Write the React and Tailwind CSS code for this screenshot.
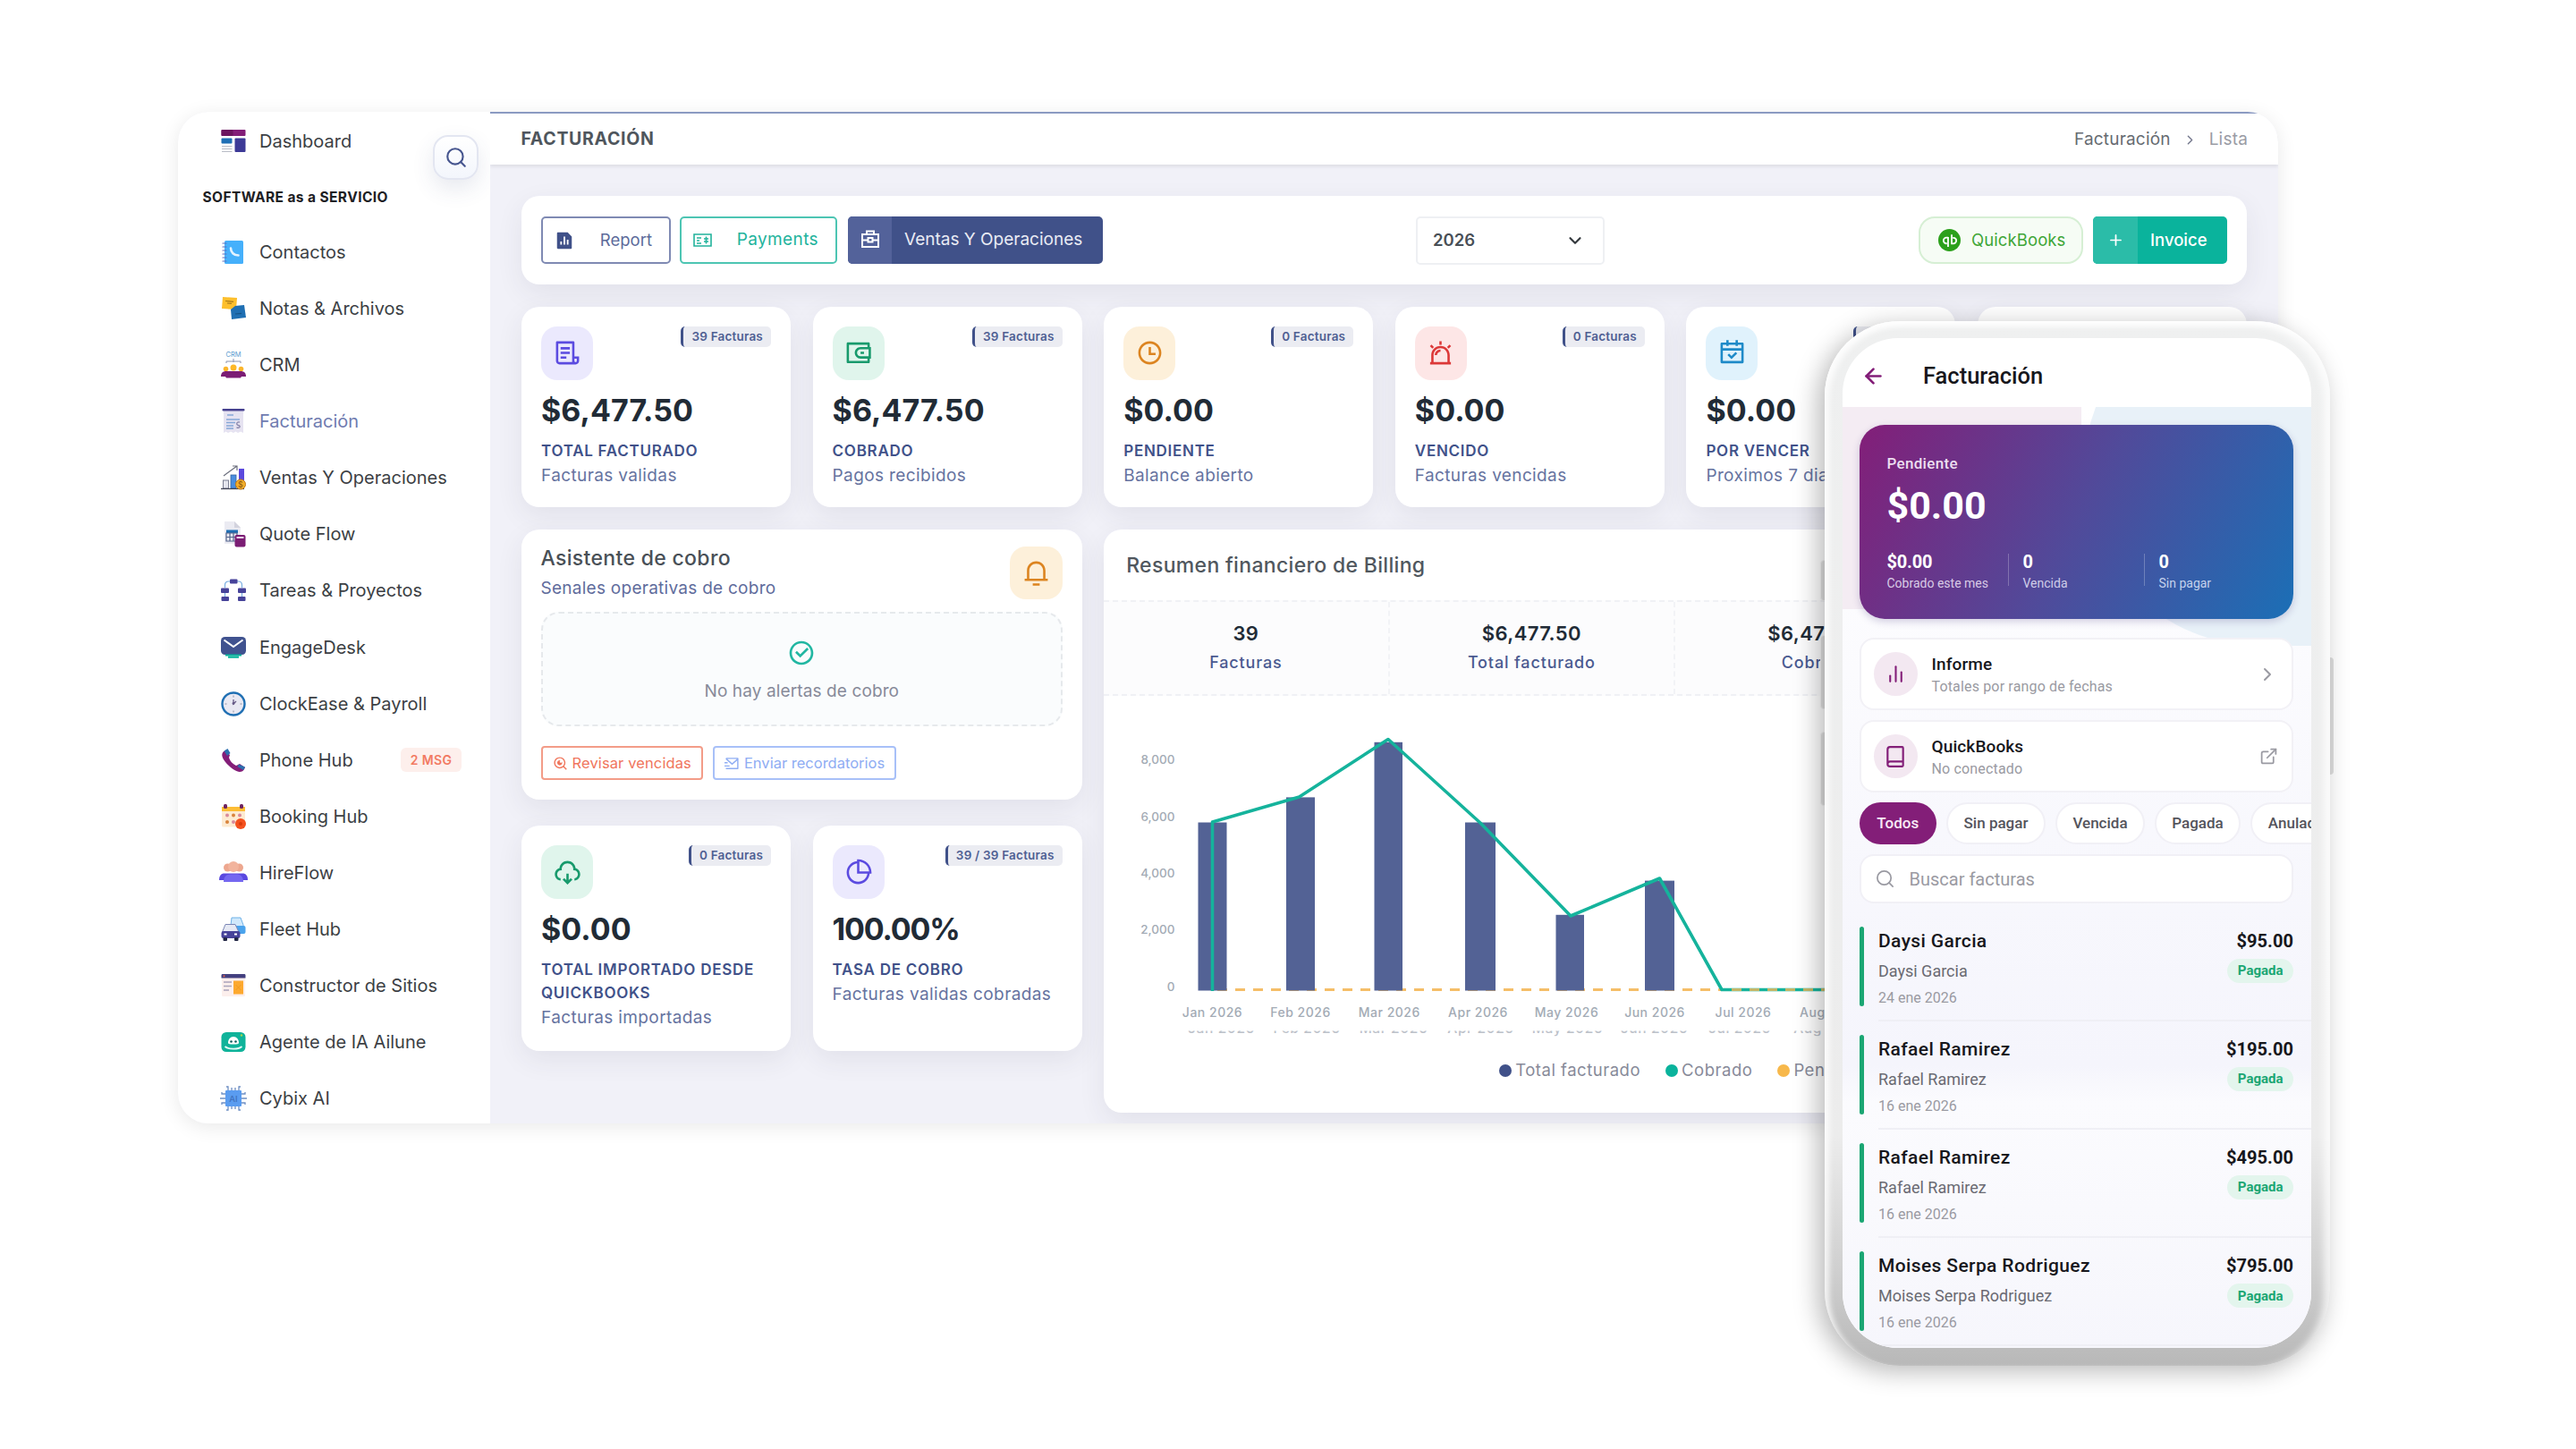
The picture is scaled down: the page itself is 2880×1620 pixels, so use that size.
import { ArrowLeft, Book, ChevronDown, ChevronRight, ExternalLink, Plus, Search } from "lucide-react"
import { FiBarChart2 } from "react-icons/fi"
import {
  RiAlarmWarningLine,
  RiCalendarCheckLine,
  RiCheckboxCircleLine,
  RiDownloadCloud2Line,
  RiFileChartFill,
  RiFileList3Line,
  RiMailSendLine,
  RiNotification3Line,
  RiPieChart2Line,
  RiSearchEyeLine,
  RiTimeLine,
  RiWallet3Line,
} from "react-icons/ri"

/* ---------- Sidebar icons ---------- */

const DashboardIcon = () => (
  <>
    <rect x="0.5" y="1" width="27" height="7" rx="1" fill="#831e78" />
    <rect x="0.5" y="1" width="13" height="7" rx="1" fill="#6b155f" />
    <rect x="0.5" y="10.5" width="12" height="6" rx="1" fill="#1e6fb5" />
    <rect x="15.5" y="10.5" width="12" height="15.5" rx="1" fill="#3d3a97" />
    <path d="M1 19.5h11.500M1 22.500h11.500M1 25.500h11.500" stroke="#b9bcc6" strokeWidth="1.2" />
  </>
)

const ContactsIcon = () => (
  <>
    <rect x="4" y="1" width="21" height="26" rx="1.5" fill="#45b0fb" />
    <path d="M2 4h4M2 8h4M2 12h4M2 16h4M2 20h4M2 24h4" stroke="#5b6fc0" strokeWidth="1.2" strokeLinecap="round" />
    <path d="M11 9.500c0 4.500 3.500 8 8.500 8" stroke="#e3f3ff" strokeWidth="2.6" strokeLinecap="round" fill="none" />
  </>
)

const NotesIcon = () => (
  <>
    <path d="M2 1l16 1-1 13-16-1z" fill="#fdbf2d" />
    <path d="M5 5.500l9 .8M7 8l5 .4" stroke="#a87a1d" strokeWidth="1.2" />
    <path d="M16 11l10-1 2 14-16 2-1-11z" fill="#1f6fb3" />
    <path d="M16 20l7-.6" stroke="#155488" strokeWidth="1.2" />
  </>
)

const CrmIcon = () => (
  <>
    <text x="14" y="5" textAnchor="middle" fontSize="7.5" fontFamily="Inter, sans-serif" fill="#5b9bd0">CRM</text>
    <path d="M6 12v-2h16v2M14 7v4" stroke="#8a93ad" strokeWidth="1" fill="none" />
    <circle cx="5.5" cy="18.500" r="2.8" fill="#fbb62c" />
    <circle cx="22.5" cy="18.500" r="2.8" fill="#fbb62c" />
    <circle cx="14" cy="17" r="3.5" fill="#fdb827" />
    <path d="M0 27c0-4 2-6 6-6h16c4 0 6 2 6 6h-5l-1 1.500H6L5 27z" fill="#7b1d74" />
  </>
)

const InvoiceIcon = () => (
  <>
    <path d="M3 2h22v25l-3-1.500-3 1.500-2.500-1.500L14 27l-3-1.500L8 27l-2.500-1.500L3 27z" fill="#e6e3f1" />
    <rect x="1.5" y="0" width="25" height="2.6" rx="1" fill="#46418f" />
    <path d="M7 7h7M6 12h15M6 15.500h10M6 19h8M6 22h8" stroke="#86a8d8" strokeWidth="1.4" />
    <path d="M21 15c-4-1-4 3-1.500 3.500S22 22 17.500 21" stroke="#8b88ad" strokeWidth="1.3" fill="none" />
  </>
)

const SalesIcon = () => (
  <>
    <path d="M3 12L18 1M13 1h5v5" stroke="#6c6f7d" strokeWidth="1.2" fill="none" />
    <rect x="2.5" y="17" width="6" height="9" fill="#e5e6ee" stroke="#7b7f92" />
    <rect x="11" y="11" width="6" height="15" fill="#4a8ee0" stroke="#35639f" strokeWidth="0.8" />
    <rect x="20" y="4" width="6" height="22" fill="#5b49dd" />
    <path d="M0 26.500h26" stroke="#3f4353" strokeWidth="1.2" />
    <circle cx="22" cy="21.500" r="5.5" fill="#f5ae2a" stroke="#c07a18" />
    <text x="22" y="25" textAnchor="middle" fontSize="9" fontFamily="Inter, sans-serif" fill="#8a540e">$</text>
  </>
)

const QuoteIcon = () => (
  <>
    <path d="M4 0h11l7 7v18H4z" fill="#ebebf2" />
    <path d="M15 0l7 7h-7z" fill="#d3d3de" />
    <rect x="6" y="9.500" width="13" height="3.5" fill="#1f6fb3" />
    <path d="M6 13h12v9H6zM10 13v9M14 13v9M6 17.500h12" stroke="#53648c" strokeWidth="1.2" fill="none" />
    <rect x="15.5" y="15" width="12" height="13.5" rx="2" fill="#7b1d74" />
    <rect x="17.5" y="17" width="8" height="2" fill="#edd3ea" />
  </>
)

const TasksIcon = () => (
  <>
    <path d="M4.500 11V8c0-2.500 1.500-4 4-4h11c2.500 0 4 1.500 4 4v3" stroke="#79aee2" strokeWidth="1.2" fill="none" />
    <path d="M4.500 17v4M23.500 17v4" stroke="#79aee2" strokeWidth="1.2" />
    <g fill="#47439a">
      <rect x="10" y="1.5" width="8.5" height="5" rx="1" />
      <rect x="0" y="11.5" width="9" height="5.5" rx="1" />
      <rect x="19" y="11.5" width="9" height="5.5" rx="1" />
      <rect x="0.5" y="21" width="8.5" height="5" rx="1" />
      <rect x="19" y="21" width="8.5" height="5" rx="1" />
    </g>
  </>
)

const EngageIcon = () => (
  <>
    <rect x="0" y="2" width="28" height="20" rx="4.5" fill="#40528f" />
    <path d="M3.500 5.500L14 13l10.500-7.500" stroke="#fff" strokeWidth="2" fill="none" />
    <path d="M5 22.500h18M8 24.800h12" stroke="#0ab39c" strokeWidth="2" />
  </>
)

const ClockIcon = () => (
  <>
    <circle cx="14" cy="14" r="12.5" fill="#e9e9f3" stroke="#1f6fb3" strokeWidth="2.4" />
    <path d="M14 4.500v2M14 21.500v2M4.500 14h2M21.500 14h2" stroke="#8c90a3" />
    <path d="M14 9v5l3-3" stroke="#665a86" strokeWidth="1.3" fill="none" />
    <circle cx="14" cy="13.5" r="1.4" fill="#665a86" />
  </>
)

const PhoneIcon = () => (
  <>
    <path d="M5 3c-5 2-5 7 0 13s12 11 16 11 5-3 6-5l-6-4-4 2c-4-2-7-5-8-9l1-3z" fill="#831e78" />
    <path d="M3.500 3.500l4-2.500 3 5-3.500 3zM20 18.500l7 3-2 3.500-6.500-4z" fill="#2c6fae" />
  </>
)

const BookingIcon = () => (
  <>
    <rect x="1" y="3" width="26" height="22.5" rx="1.5" fill="#fdebd2" />
    <path d="M1 3h26v5H1z" fill="#fdbd35" />
    <rect x="3" y="0" width="4" height="5" rx="1.5" fill="#6e2360" />
    <rect x="21" y="0" width="4" height="5" rx="1.5" fill="#6e2360" />
    <g fill="#d98a9b">
      <circle cx="7" cy="12.5" r="2" />
      <circle cx="21" cy="12.5" r="2" />
      <circle cx="14" cy="20" r="2" />
    </g>
    <g fill="#d9843c">
      <circle cx="14" cy="12.5" r="2" />
      <circle cx="7" cy="20" r="2" />
    </g>
    <circle cx="22" cy="22" r="6" fill="#f4511e" />
    <circle cx="22" cy="22" r="2" fill="#d83c0c" />
  </>
)

const HireIcon = () => (
  <>
    <circle cx="7.500" cy="8" r="4.5" fill="#eda78f" />
    <circle cx="20.500" cy="8" r="4.5" fill="#eda78f" />
    <circle cx="14" cy="7" r="6" fill="#f2b49d" />
    <path d="M-2 22c0-5 2-7.500 6-7.500h20c4 0 6 2.500 6 7.500z" fill="#5a48e0" />
    <path d="M3 24c0-6 3-8.500 8-8.500h6c5 0 8 2.500 8 8.500z" fill="#7467f0" />
  </>
)

const FleetIcon = () => (
  <>
    <path d="M12 1h10l3 8v9H10z" fill="#cfe8fb" stroke="#6fb2e8" />
    <rect x="15" y="10" width="12.5" height="9" rx="2" fill="#4aa3ec" />
    <path d="M5 8.500h11l4 8.500H1.500z" fill="#e6e9f4" stroke="#7b86b5" />
    <rect x="0.5" y="16" width="21" height="8" rx="2.5" fill="#47439a" />
    <rect x="2.5" y="23" width="4.5" height="4" rx="1" fill="#222745" />
    <rect x="15" y="23" width="4.5" height="4" rx="1" fill="#222745" />
    <path d="M3.500 19.500h3M15 19.500h3" stroke="#fff" strokeWidth="2" />
  </>
)

const SitesIcon = () => (
  <>
    <rect x="1" y="2" width="26" height="24" rx="1.5" fill="#fcefec" />
    <path d="M0.500 2.500C.5 1.500 1 1 2 1h24c1 0 1.500.5 1.500 1.500v3h-27z" fill="#43407f" />
    <circle cx="3.500" cy="3.300" r="1" fill="#f06548" />
    <path d="M3 10h9M3 14.500h9M3 19h6" stroke="#a9a3bb" strokeWidth="1.3" />
    <rect x="14" y="8.500" width="11" height="15" fill="#fda92f" />
    <path d="M16.500 13l6 6M22.500 13l-6 6" stroke="#f09b22" />
  </>
)

const AgentIcon = () => (
  <>
    <rect x="0.5" y="3" width="27" height="22" rx="5.5" fill="#0fb39a" />
    <path d="M8 15c0-4 2.500-7 6-7s6 3 6 7c0 1.500-2 1.500-6 1.500S8 16.500 8 15z" fill="#fff" />
    <circle cx="11.500" cy="13.500" r="1.3" fill="#0f5c5c" />
    <circle cx="16.500" cy="13.500" r="1.3" fill="#0f5c5c" />
    <path d="M4.500 19c4 3.500 15 3.500 19 0" stroke="#e2fbf6" strokeWidth="1.8" fill="none" />
    <circle cx="23" cy="6.500" r="1.2" fill="#a6d64b" />
  </>
)

const CybixIcon = () => (
  <>
    <path
      d="M8 6V1H6M12 6V2M16 6V2M20 6V1h2M8 22v5H6M12 22v4M16 22v4M20 22v5h2M6 9H1V7M6 14H-1M6 19H1v2M22 9h5V7M22 14h7M22 19h5v2"
      stroke="#6e8fc4"
      strokeWidth="1.3"
      fill="none"
    />
    <rect x="5" y="5" width="18" height="18" rx="1" fill="#5a9cf0" />
    <text x="14" y="17.500" textAnchor="middle" fontSize="9.5" fontWeight="500" fontFamily="Inter, sans-serif" fill="#3f70bb">AI</text>
  </>
)

const menuItems = [
  { label: "Contactos", icon: ContactsIcon },
  { label: "Notas & Archivos", icon: NotesIcon },
  { label: "CRM", icon: CrmIcon },
  { label: "Facturación", icon: InvoiceIcon, active: true },
  { label: "Ventas Y Operaciones", icon: SalesIcon },
  { label: "Quote Flow", icon: QuoteIcon },
  { label: "Tareas & Proyectos", icon: TasksIcon },
  { label: "EngageDesk", icon: EngageIcon },
  { label: "ClockEase & Payroll", icon: ClockIcon },
  { label: "Phone Hub", icon: PhoneIcon, badge: "2 MSG" },
  { label: "Booking Hub", icon: BookingIcon },
  { label: "HireFlow", icon: HireIcon },
  { label: "Fleet Hub", icon: FleetIcon },
  { label: "Constructor de Sitios", icon: SitesIcon },
  { label: "Agente de IA Ailune", icon: AgentIcon },
  { label: "Cybix AI", icon: CybixIcon },
]

function MenuItem({ label, icon: Icon, active, badge }) {
  return (
    <div className="flex h-[63.07px] shrink-0 items-center pl-[48px] pr-[32px]">
      <svg viewBox="0 0 28 28" className="h-[28px] w-[28px] shrink-0 overflow-visible">
        <Icon />
      </svg>
      <span className={`ml-[15px] whitespace-nowrap text-[20px] leading-7 ${active ? "text-[#6f7bb0]" : "text-[#3c3f44]"}`}>
        {label}
      </span>
      {badge && (
        <span className="ml-auto flex h-[27px] items-center rounded-md bg-[#fdefec] px-[10.5px] text-[14px] font-semibold tracking-[0.03em] text-[#f27a62]">
          {badge}
        </span>
      )}
    </div>
  )
}

function Sidebar() {
  return (
    <aside className="relative flex w-[349px] shrink-0 flex-col overflow-hidden bg-white pt-[1.5px]">
      <MenuItem label="Dashboard" icon={DashboardIcon} />
      <div className="flex h-[61px] shrink-0 items-center pl-[27.5px] pt-px text-[15.5px] font-bold tracking-[0.026em] text-[#1d2024]">
        SOFTWARE as a SERVICIO
      </div>
      {menuItems.map((item) => (
        <MenuItem key={item.label} {...item} />
      ))}
      <button className="absolute left-[285px] top-[25.5px] flex h-[50px] w-[51px] items-center justify-center rounded-[17px] border-2 border-[#e3e6f1] bg-linear-to-b from-white to-[#f3f6fc] shadow-[0_10px_24px_rgba(60,70,120,0.12)]">
        <Search className="h-[26px] w-[26px] text-[#47568f]" strokeWidth={2} />
      </button>
    </aside>
  )
}

/* ---------- Desktop cards ---------- */

const tones = {
  violet: "bg-[#ebe9fd] text-[#5b4be0]",
  green: "bg-[#e0f5ec] text-[#189a6c]",
  amber: "bg-[#fdf0da] text-[#dc8420]",
  red: "bg-[#fde6e6] text-[#dc3838]",
  sky: "bg-[#e0f2fc] text-[#1e8ac8]",
}

const cardShadow = "shadow-[0_10px_30px_rgba(50,55,80,0.08)]"

function StatCard({ icon: Icon, tone, badge, value, title, text, tight }) {
  return (
    <div className={`rounded-[20px] bg-white px-[22px] pt-[22px] ${cardShadow}`}>
      <div className="flex items-start justify-between">
        <div className={`flex h-[60px] w-[58px] items-center justify-center rounded-[18px] ${tones[tone]}`}>
          <Icon className="h-[31px] w-[31px]" />
        </div>
        {badge && (
          <span className="flex h-[23px] items-center rounded-[5px] border-l-[3px] border-[#405189] bg-[#ebecf2] px-[9px] text-[13.5px] font-semibold tracking-[0.015em] text-[#4f5f93]">
            {badge}
          </span>
        )}
      </div>
      <p className={`mt-[14px] text-[34px] font-bold leading-[40px] text-[#212b36] ${tight ? "tracking-[-0.035em]" : "tracking-[0.002em]"}`}>
        {value}
      </p>
      <p className="mt-[12px] whitespace-pre-line text-[17px] font-semibold leading-[26px] tracking-[0.043em] text-[#405189]">{title}</p>
      <p className="mt-px whitespace-nowrap text-[19px] leading-[28px] tracking-[0.02em] text-[#66739f]">{text}</p>
    </div>
  )
}

function CollectionAssistant() {
  return (
    <div className={`h-[301.5px] rounded-[20px] bg-white px-[21.5px] pt-[17px] ${cardShadow}`}>
      <div className="flex h-[75px] items-start justify-between">
        <div>
          <h3 className="text-[23px] font-medium leading-[30px] tracking-[0.014em] text-[#495057]">Asistente de cobro</h3>
          <p className="mt-[5px] text-[19px] leading-[28px] tracking-[0.014em] text-[#5f6c9c]">Senales operativas de cobro</p>
        </div>
        <div className="mt-[2px] flex h-[59px] w-[59px] items-center justify-center rounded-[18px] bg-[#fdf0da] text-[#dc8420]">
          <RiNotification3Line className="h-[31px] w-[31px]" />
        </div>
      </div>
      <div className="flex h-[128px] flex-col items-center rounded-[20px] border-2 border-dashed border-[#e6e9ec] bg-[#fafcfd] pt-[28px]">
        <RiCheckboxCircleLine className="h-[32px] w-[32px] text-[#22b7a2]" />
        <p className="mt-[13px] text-[19px] leading-[28px] tracking-[0.006em] text-[#878a99]">No hay alertas de cobro</p>
      </div>
      <div className="mt-[22px] flex gap-[11px]">
        <button className="flex h-[38px] items-center gap-[5px] whitespace-nowrap rounded-[4px] border-2 border-[#f39c88] px-[11px] text-[16.5px] tracking-[0.007em] text-[#f0765c]">
          <RiSearchEyeLine className="h-[17px] w-[17px]" />
          Revisar vencidas
        </button>
        <button className="flex h-[38px] items-center gap-[5px] whitespace-nowrap rounded-[4px] border-2 border-[#a8c0f8] px-[11px] text-[16.5px] text-[#8fadf3]">
          <RiMailSendLine className="h-[17px] w-[17px]" />
          Enviar recordatorios
        </button>
      </div>
    </div>
  )
}

/* ---------- Billing chart ---------- */

const bars = [
  { x: 105.5, y: 141.5, w: 32 },
  { x: 204, y: 113.4, w: 32 },
  { x: 302.5, y: 51.8, w: 31.5 },
  { x: 404, y: 141.5, w: 34 },
  { x: 505.5, y: 244.8, w: 31.5 },
  { x: 605, y: 206.6, w: 33 },
]

const yLabels = [
  { y: 71.5, text: "8,000" },
  { y: 135, text: "6,000" },
  { y: 198.8, text: "4,000" },
  { y: 261, text: "2,000" },
  { y: 325, text: "0" },
]

const months = [
  { x: 121.5, text: "Jan 2026" },
  { x: 220, text: "Feb 2026" },
  { x: 319.3, text: "Mar 2026" },
  { x: 418.5, text: "Apr 2026" },
  { x: 517.5, text: "May 2026" },
  { x: 616, text: "Jun 2026" },
  { x: 715, text: "Jul 2026" },
  { x: 813, text: "Aug 2026" },
]

const monthsBehind = [
  { x: 131.5, text: "Jan 2026" },
  { x: 227, text: "Feb 2026" },
  { x: 324, text: "Mar 2026" },
  { x: 421.5, text: "Apr 2026" },
  { x: 518.5, text: "May 2026" },
  { x: 615.5, text: "Jun 2026" },
  { x: 711, text: "Jul 2026" },
  { x: 810, text: "Aug 2026" },
]

function BillingChart() {
  return (
    <svg viewBox="0 0 1277 386" className="block h-[386px] w-[1277px]" fontFamily="Inter, sans-serif">
      <path d="M121 328.500H1240" stroke="#f5be68" strokeWidth="3" strokeDasharray="11 9" strokeDashoffset="-6" />
      {bars.map((b) => (
        <rect key={b.x} x={b.x} y={b.y} width={b.w} height={329.5 - b.y} fill="#536295" />
      ))}
      <path
        d="M121.500 330V141L218.500 113L318 48.500L421 142L522 246L621.500 204L691 328.500H1240"
        stroke="#15b39c"
        strokeWidth="3.6"
        strokeLinejoin="round"
        fill="none"
      />
      <path d="M702 328.500H1240" stroke="#f0b95c" strokeWidth="3" strokeDasharray="11 9" opacity="0.8" />
      <g fontSize="13.5" fontWeight="500" fill="#a3abb5" textAnchor="end">
        {yLabels.map((l) => (
          <text key={l.text} x="79.500" y={l.y + 4.5}>{l.text}</text>
        ))}
      </g>
      <g fontSize="14" fontWeight="500" letterSpacing="0.5" fill="#a3abb5" textAnchor="middle">
        {months.map((m) => (
          <text key={m.text} x={m.x} y="358.500">{m.text}</text>
        ))}
      </g>
      <clipPath id="labels-behind">
        <rect x="0" y="374.5" width="1277" height="6" />
      </clipPath>
      <g fontSize="15.5" fontWeight="500" letterSpacing="0.6" fill="#bcc1c9" textAnchor="middle" clipPath="url(#labels-behind)">
        {monthsBehind.map((m) => (
          <text key={m.text} x={m.x} y="376.500">{m.text}</text>
        ))}
      </g>
    </svg>
  )
}

const summary = [
  { value: "39", label: "Facturas" },
  { value: "$6,477.50", label: "Total facturado" },
  { value: "$6,477.50", label: "Cobrado" },
  { value: "$0.00", label: "Pendiente" },
]

const legend = [
  { label: "Total facturado", dot: "bg-[#405189]" },
  { label: "Cobrado", dot: "bg-[#0ab39c]" },
  { label: "Pendiente", dot: "bg-[#f7b84b]" },
]

function FinancialSummary() {
  return (
    <div className={`h-[651.5px] overflow-hidden rounded-[20px] bg-white ${cardShadow}`}>
      <h3 className="flex h-[79px] items-center px-[25px] pt-[2px] text-[23px] font-medium tracking-[0.014em] text-[#50575e]">
        Resumen financiero de Billing
      </h3>
      <div className="grid h-[107px] grid-cols-4 divide-x-2 divide-dashed divide-[#f2f3f6] border-y-2 border-dashed border-[#f0f1f5] bg-[#fcfcfd] text-center">
        {summary.map((s) => (
          <div key={s.label} className="pt-[19.5px]">
            <p className="text-[22px] font-semibold leading-[30px] tracking-[0.018em] text-[#212b36]">{s.value}</p>
            <p className="mt-[5px] text-[18px] font-medium leading-[26px] tracking-[0.047em] text-[#4a5a90]">{s.label}</p>
          </div>
        ))}
      </div>
      <BillingChart />
      <div className="flex h-[66px] items-center pl-[442px] text-[18.5px] tracking-[0.028em] text-[#878a99]">
        {legend.map((l) => (
          <span key={l.label} className="mr-[28px] flex items-center gap-[4px] whitespace-nowrap">
            <span className={`h-[14px] w-[14px] rounded-full ${l.dot}`} />
            {l.label}
          </span>
        ))}
      </div>
    </div>
  )
}

/* ---------- Desktop panel ---------- */

function Toolbar() {
  return (
    <div className={`flex h-[99px] items-center rounded-[20px] bg-white px-[22px] text-[19px] ${cardShadow}`}>
      <button className="flex h-[53px] w-[145px] items-center justify-between rounded-[5px] border-2 border-[#7f8ab3] pl-[13px] pr-[19px] text-[#5d6b9b]">
        <RiFileChartFill className="h-[22px] w-[22px] text-[#405189]" />
        <span className="text-[18.5px]">Report</span>
      </button>
      <button className="ml-[10px] flex h-[53px] w-[176px] items-center justify-between rounded-[5px] border-2 border-[#4dc5b3] pl-[13px] pr-[19px] text-[#22b39c]">
        <svg viewBox="0 0 21 15" className="h-[15px] w-[21px]" fill="none" stroke="currentColor" strokeWidth="1.6">
          <path d="M1 1h19v13H1zM4 5h5M4 8h3M4 11h5M14.500 3.500v8M12 6h5M12 9h5" />
        </svg>
        <span className="tracking-[0.02em]">Payments</span>
      </button>
      <button className="ml-[12px] flex h-[53px] w-[285px] items-center overflow-hidden rounded-[5px] bg-[#405189] text-[#e9ebf4]">
        <span className="flex h-full w-[49px] items-center justify-center bg-[#53629a] pb-1 text-white">
          <svg viewBox="0 0 20 20" className="h-[20px] w-[20px]" fill="none" stroke="currentColor" strokeWidth="2">
            <path d="M1 5h18v14H1zM6 5V1.500h8V5M1 11.500h6M13 11.500h6" />
            <path d="M7.500 9h5v4.500h-5z" />
          </svg>
        </span>
        <span className="ml-[14px] whitespace-nowrap">Ventas Y Operaciones</span>
      </button>
      <div className="ml-[350px] flex h-[54px] w-[211px] items-center justify-between rounded-[5px] border-2 border-[#eef0f3] pl-[17px] pr-[20px] text-[18.5px] font-semibold text-[#495057]">
        2026
        <ChevronDown className="h-[22px] w-[22px] text-[#34393e]" strokeWidth={2.4} />
      </div>
      <button className="ml-auto flex h-[53px] w-[184px] items-center rounded-[18px] border-2 border-[#d6efd4] bg-[#f6fcf5] pl-[20px] text-[18.5px] text-[#3fa638]">
        <span className="flex h-[25px] w-[25px] items-center justify-center rounded-full bg-[#2ca01c]">
          <svg viewBox="0 0 24 24" className="h-[22px] w-[22px]" fill="none" stroke="#fff" strokeWidth="2">
            <path d="M9.800 8.300H7.800a3.600 3.600 0 0 0 0 7.200h.7M9.800 7.500v12M14.200 15.700h2a3.600 3.600 0 0 0 0-7.200h-.7M14.200 16.500v-12" />
          </svg>
        </span>
        <span className="ml-[12px] tracking-[0.005em]">QuickBooks</span>
      </button>
      <button className="ml-[11px] flex h-[53px] w-[150px] items-center overflow-hidden rounded-[5px] bg-[#0ab39c] text-[18.5px] font-medium text-white">
        <span className="flex h-full w-[50px] items-center justify-center bg-[#2bbca8]">
          <Plus className="h-[19px] w-[19px]" strokeWidth={2.2} />
        </span>
        <span className="ml-[14px]">Invoice</span>
      </button>
    </div>
  )
}

function DesktopPanel() {
  return (
    <div className="flex h-[1131px] w-[2348px] overflow-hidden rounded-[34px] bg-[#f1f1f8] shadow-[0_4px_22px_rgba(0,0,0,0.09)]">
      <Sidebar />
      <main className="w-[1999px]">
        <header className="flex h-[59px] items-center justify-between border-t-2 border-[#8b9ac2] bg-white pl-[34.5px] pr-[34px] shadow-[0_2px_4px_rgba(56,65,74,0.12)]">
          <h1 className="text-[19.5px] font-bold tracking-[0.035em] text-[#4f565d]">FACTURACIÓN</h1>
          <nav className="flex items-center pt-px text-[19px] tracking-[0.01em] text-[#666b71]">
            Facturación
            <ChevronRight className="mx-[13px] h-[17px] w-[17px] text-[#74788d]" />
            <span className="text-[#9a9ca5]">Lista</span>
          </nav>
        </header>
        <div className="pl-[35px] pr-[35px] pt-[35px]">
          <Toolbar />
          <div className="mt-[24.5px] grid grid-cols-6 gap-x-[24.6px]">
            <div className="col-span-6 grid h-[224px] grid-cols-6 gap-x-[24.6px]">
              <StatCard icon={RiFileList3Line} tone="violet" badge="39 Facturas" value="$6,477.50" title="TOTAL FACTURADO" text="Facturas validas" />
              <StatCard icon={RiWallet3Line} tone="green" badge="39 Facturas" value="$6,477.50" title="COBRADO" text="Pagos recibidos" />
              <StatCard icon={RiTimeLine} tone="amber" badge="0 Facturas" value="$0.00" title="PENDIENTE" text="Balance abierto" />
              <StatCard icon={RiAlarmWarningLine} tone="red" badge="0 Facturas" value="$0.00" title="VENCIDO" text="Facturas vencidas" />
              <StatCard icon={RiCalendarCheckLine} tone="sky" badge="0 Facturas" value="$0.00" title="POR VENCER" text="Proximos 7 dias" />
              <div className={`rounded-[20px] bg-white ${cardShadow}`} />
            </div>
            <div className="col-span-2 mt-[25.5px]">
              <CollectionAssistant />
              <div className="mt-[29.5px] grid h-[251.5px] grid-cols-2 gap-x-[24.6px]">
                <StatCard icon={RiDownloadCloud2Line} tone="green" badge="0 Facturas" value="$0.00" title={"TOTAL IMPORTADO DESDE\nQUICKBOOKS"} text="Facturas importadas" />
                <StatCard icon={RiPieChart2Line} tone="violet" badge="39 / 39 Facturas" value="100.00%" title="TASA DE COBRO" text="Facturas validas cobradas" tight />
              </div>
            </div>
            <div className="col-span-4 mt-[25.5px]">
              <FinancialSummary />
            </div>
          </div>
        </div>
      </main>
    </div>
  )
}

/* ---------- Phone ---------- */

const chips = [
  { label: "Todos", width: "w-[86.5px]", active: true },
  { label: "Sin pagar", width: "w-[111px]" },
  { label: "Vencida", width: "w-[100px]" },
  { label: "Pagada", width: "w-[96px]" },
  { label: "Anulada", width: "w-[102px]" },
]

const invoices = [
  { id: 1, name: "Daysi Garcia", date: "24 ene 2026", amount: "$95.00" },
  { id: 2, name: "Rafael Ramirez", date: "16 ene 2026", amount: "$195.00" },
  { id: 3, name: "Rafael Ramirez", date: "16 ene 2026", amount: "$495.00" },
  { id: 4, name: "Moises Serpa Rodriguez", date: "16 ene 2026", amount: "$795.00" },
]

function BalanceCard() {
  return (
    <div className="h-[217px] rounded-[28px] bg-linear-[118deg,#831e78_0%,#514a9a_50%,#1b6fb6_100%] px-[31px] pt-[32px] text-white shadow-[0_3px_8px_rgba(60,40,120,0.22)]">
      <p className="text-[17px] font-medium leading-[22px] tracking-[0.018em] text-[#ecdff0]">Pendiente</p>
      <p className="mt-[11px] text-[43px] font-bold leading-[50px]">$0.00</p>
      <div className="mt-[26px] flex">
        <div className="w-[135px]">
          <p className="text-[20px] font-bold leading-[24px] tracking-[-0.01em]">$0.00</p>
          <p className="mt-[2px] whitespace-nowrap text-[14px] leading-[20px] text-[#d9cbe6]">Cobrado este mes</p>
        </div>
        <div className="mt-[3px] h-[36px] w-[152px] border-l border-white/25 pl-[16px]">
          <p className="-mt-[3px] text-[20px] font-bold leading-[24px]">0</p>
          <p className="mt-[2px] text-[14px] leading-[20px] text-[#cfcde8]">Vencida</p>
        </div>
        <div className="mt-[3px] h-[36px] border-l border-white/25 pl-[16px]">
          <p className="-mt-[3px] text-[20px] font-bold leading-[24px]">0</p>
          <p className="mt-[2px] text-[14px] leading-[20px] text-[#c5d2ec]">Sin pagar</p>
        </div>
      </div>
    </div>
  )
}

function LinkCard({ icon, title, text, action }) {
  return (
    <div className="flex h-[81px] items-center rounded-[16px] border-2 border-[#f2f1f6] bg-white pl-[14px] pr-[15px]">
      <div className="flex h-[49px] w-[49px] items-center justify-center rounded-full bg-[#f3e8f1] text-[#831e78]">{icon}</div>
      <div className="ml-[16px] flex-1 pt-px">
        <p className="text-[19px] font-medium leading-[24px] tracking-[0.006em] text-[#17171c]">{title}</p>
        <p className="mt-[2px] text-[16px] leading-[21px] tracking-[0.01em] text-[#9a9aa2]">{text}</p>
      </div>
      {action}
    </div>
  )
}

function InvoiceRow({ name, date, amount }) {
  return (
    <div className="flex h-[121.3px]">
      <div className="h-[89px] w-[5.5px] rounded-full bg-[#1ba673]" />
      <div className="ml-[16px] flex h-[106px] flex-1 justify-between border-b-2 border-[#efeff5] pr-[20px] pt-[3px]">
        <div>
          <p className="text-[21px] font-medium leading-[26px] tracking-[0.018em] text-[#17171c]">{name}</p>
          <p className="mt-[9px] text-[18px] leading-[24px] text-[#6a6a72]">{name}</p>
          <p className="mt-[8px] text-[16px] leading-[20px] text-[#9a9aa2]">{date}</p>
        </div>
        <div className="flex flex-col items-end">
          <p className="text-[20px] font-bold leading-[26px] tracking-[0.003em] text-[#17171c]">{amount}</p>
          <span className="mt-[7px] flex h-[27px] items-center rounded-full bg-[#e3f5ed] px-[11.5px] text-[15px] font-bold text-[#1ba673]">
            Pagada
          </span>
        </div>
      </div>
    </div>
  )
}

function Phone() {
  return (
    <div className="absolute left-[2040px] top-[359px] font-['Roboto',sans-serif]">
      {/* Side buttons */}
      <div className="absolute -left-[5px] top-[267px] h-[46px] w-[8px] rounded-l-[4px] border border-[#f6f6f6] bg-[#e2e2e2]" />
      <div className="absolute -left-[5px] top-[351px] h-[83px] w-[8px] rounded-l-[4px] border border-[#f6f6f6] bg-[#e2e2e2]" />
      <div className="absolute -left-[5px] top-[459px] h-[83px] w-[8px] rounded-l-[4px] border border-[#f6f6f6] bg-[#e2e2e2]" />
      <div className="absolute -right-[4px] top-[376px] h-[131px] w-[8px] rounded-r-[4px] bg-[#dedede]" />

      <div className="relative h-[1168px] w-[565px] rounded-[84px] bg-linear-[180deg,#eff0f0_0%,#ececec_78%,#cfcfcf_91%,#b8b8b8_100%] pb-[20px] pl-[20px] pr-[21px] pt-[19px] shadow-[-7px_6px_28px_rgba(0,0,0,0.28),inset_5px_5px_6px_rgba(255,255,255,0.8),inset_-7px_5px_8px_rgba(255,255,255,0.75)]">
        <div className="flex h-full flex-col overflow-hidden rounded-[62px] bg-white">
          <div className="flex h-[77px] shrink-0 items-center pl-[21px] pt-[7px]">
            <ArrowLeft className="h-[27px] w-[27px] text-[#831e78]" strokeWidth={2.4} />
            <h2 className="ml-[42px] text-[25.5px] font-medium leading-[32px] text-[#17171c]">Facturación</h2>
          </div>
          <div className="relative flex-1 overflow-hidden bg-linear-[180deg,#ffffff_0%,#fbfbfe_28%,#f8f8fd_45%,#f5f5fc_70%,#fbfbfe_74%,#f9f9fd_85%,#f6f6fc_100%] pl-[18.5px] pt-[20px]">
            {/* Soft brand shapes behind the balance card */}
            <div className="absolute -left-[230px] -top-[260px] h-[486px] w-[497px] rounded-[30%] rounded-tr-none bg-[#f4ecf3]" />
            <div className="absolute -top-[126px] left-[270px] h-[393px] w-[512px] rounded-full bg-[#e8f1f8]" />
            <div className="relative pr-[20px]">
              <BalanceCard />
              <div className="mt-[21px] flex flex-col gap-[11px]">
                <LinkCard
                  icon={<FiBarChart2 className="h-[25px] w-[25px]" />}
                  title="Informe"
                  text="Totales por rango de fechas"
                  action={<ChevronRight className="h-[24px] w-[24px] text-[#9a9aa2]" />}
                />
                <LinkCard
                  icon={<Book className="h-[26px] w-[26px]" />}
                  title="QuickBooks"
                  text="No conectado"
                  action={<ExternalLink className="h-[21px] w-[21px] text-[#9a9aa2]" />}
                />
              </div>
            </div>
            <div className="relative mt-[11px] flex gap-[11px] overflow-hidden">
              {chips.map((chip) => (
                <span
                  key={chip.label}
                  className={`flex h-[47px] shrink-0 items-center justify-center rounded-full text-[17px] font-medium ${chip.width} ${
                    chip.active ? "bg-[#831e78] text-[#f8e9f6]" : "border-2 border-[#f1f0f6] bg-white text-[#54545c]"
                  }`}
                >
                  {chip.label}
                </span>
              ))}
            </div>
            <div className="relative mr-[20px] mt-[10.5px] flex h-[55px] items-center rounded-[16px] border-2 border-[#f1f0f6] bg-white pl-[15px] text-[20px] text-[#9a9aa2]">
              <Search className="h-[23px] w-[23px]" strokeWidth={1.8} />
              <span className="ml-[16px] pt-px">Buscar facturas</span>
            </div>
            <div className="relative mt-[26px]">
              {invoices.map((invoice) => (
                <InvoiceRow key={invoice.id} {...invoice} />
              ))}
            </div>
          </div>
        </div>
      </div>
    </div>
  )
}

export default function App() {
  return (
    <div className="relative h-[1620px] w-[2880px] overflow-hidden bg-white pl-[199px] pt-[125px] font-['Inter',sans-serif]">
      <DesktopPanel />
      <Phone />
    </div>
  )
}
